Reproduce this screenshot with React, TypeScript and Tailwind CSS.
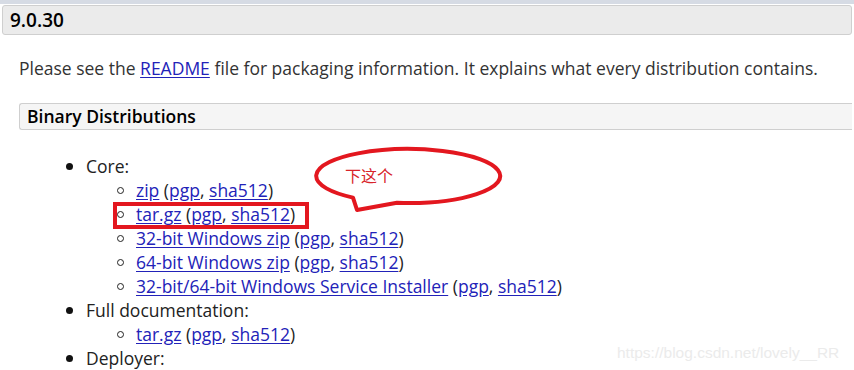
import React from "react";

type Sub = { label: string };

const core: Sub[] = [
  { label: "zip" },
  { label: "tar.gz" },
  { label: "32-bit Windows zip" },
  { label: "64-bit Windows zip" },
  { label: "32-bit/64-bit Windows Service Installer" },
];

function A({ children }: { children: React.ReactNode }) {
  return <a href="#" className="text-[#2222b8] underline underline-offset-2">{children}</a>;
}

function SubItem({ label }: Sub) {
  return (
    <li className="flex h-[24px] items-center">
      <span className="mr-[12px] ml-[117px] h-[7px] w-[7px] rounded-full border border-[#222]" />
      <span>
        <A>{label}</A> (<A>pgp</A>, <A>sha512</A>)
      </span>
    </li>
  );
}

function Item({ label }: { label: string }) {
  return (
    <li className="flex h-[24px] items-center">
      <span className="mr-[13px] ml-[66px] h-[7px] w-[7px] rounded-full bg-[#111]" />
      <span>{label}</span>
    </li>
  );
}

export default function App() {
  return (
    <div
      className="relative h-[370px] w-[854px] overflow-hidden bg-white text-[#222]"
      style={{ fontFamily: '"Open Sans", "Noto Sans CJK SC", sans-serif' }}
    >
      <div className="h-[4px] bg-[#d6dbe4]" />
      <div className="mx-[2px] mt-[1px] flex h-[30px] items-center rounded-[3px] border border-[#cfcfcf] bg-[#ebebeb] px-[7px] text-[19px] font-semibold text-black">
        9.0.30
      </div>

      <p className="mt-[18px] ml-[19px] text-[17.5px] leading-[30px] text-[#333]">
        Please see the <A>README</A> file for packaging information. It explains what every distribution contains.
      </p>

      <div className="mt-[20px] ml-[19px] mr-[2px] flex h-[27px] items-center rounded-l-[3px] border border-r-0 border-[#cfcfcf] bg-[#f5f5f5] px-[7px] text-[17.5px] font-semibold text-black">
        Binary Distributions
      </div>

      <ul className="mt-[24px] text-[17.5px] text-[#222]">
        <Item label="Core:" />
        {core.map((s) => (
          <SubItem key={s.label} label={s.label} />
        ))}
        <Item label="Full documentation:" />
        <SubItem label="tar.gz" />
        <Item label="Deployer:" />
      </ul>

      {/* red box annotation */}
      <div className="absolute top-[202px] left-[113px] h-[27px] w-[196px] border-[4px] border-[#e3171f]" />

      {/* speech bubble */}
      <svg className="absolute top-[145px] left-[312px]" width="195" height="70" viewBox="0 0 195 70">
        <path
          d="M 85 57.8 A 92 27 0 1 0 41 52.6 L 45 65 Z"
          fill="none"
          stroke="#e3171f"
          strokeWidth="4"
          strokeLinejoin="round"
        />
      </svg>
      <span className="absolute top-[164px] left-[345px] text-[16px] text-[#d8242a]">下这个</span>

      <span
        className="absolute top-[341px] left-[617px] text-[15.5px] text-[#ebebeb]"
        style={{ fontFamily: '"Liberation Sans", sans-serif' }}
      >
        https://blog.csdn.net/lovely__RR
      </span>
    </div>
  );
}
